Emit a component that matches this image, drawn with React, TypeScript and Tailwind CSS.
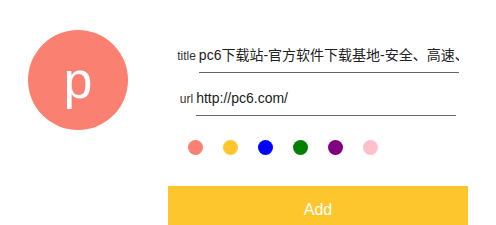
export default function App() {
  const colors = ["#fa8072", "#fcc62c", "#0000ff", "#008000", "#800080", "#ffc0cb"];
  return (
    <div className="w-[496px] h-[225px] bg-white flex overflow-hidden" style={{ fontFamily: '"Liberation Sans", Arial, "Noto Sans CJK SC", sans-serif' }}>
      <div className="pl-[28px] pt-[30px] w-[168px] shrink-0">
        <div className="w-[100px] h-[100px] rounded-full bg-[#fa8072] flex items-center justify-center text-white text-[52px] leading-none">
          p
        </div>
      </div>
      <div className="w-[300px] shrink-0 flex flex-col pt-[42px]">
        <div className="shrink-0 flex items-baseline justify-center gap-[3px]">
          <span className="text-[12px] text-[#333]">title</span>
          <div className="w-[260px] h-[31px] pb-[4px] border-b border-[#666] text-[14px] text-[#222] whitespace-nowrap overflow-hidden flex items-center">
            pc6下载站-官方软件下载基地-安全、高速、放心的专业下载站
          </div>
        </div>
        <div className="shrink-0 flex items-baseline justify-center gap-[3px] mt-[12px]">
          <span className="text-[12px] text-[#333]">url</span>
          <div className="w-[260px] h-[31px] pb-[4px] border-b border-[#666] text-[14px] text-[#222] whitespace-nowrap overflow-hidden flex items-center">
            http://pc6.com/
          </div>
        </div>
        <div className="shrink-0 flex gap-[20px] pl-[20px] mt-[24px]">
          {colors.map((c) => (
            <div key={c} className="w-[15px] h-[15px] rounded-full" style={{ backgroundColor: c }} />
          ))}
        </div>
        <button className="shrink-0 mt-[31px] w-[300px] h-[48px] bg-[#fcc62c] text-white text-[16px] flex items-center justify-center">
          Add
        </button>
      </div>
    </div>
  );
}
